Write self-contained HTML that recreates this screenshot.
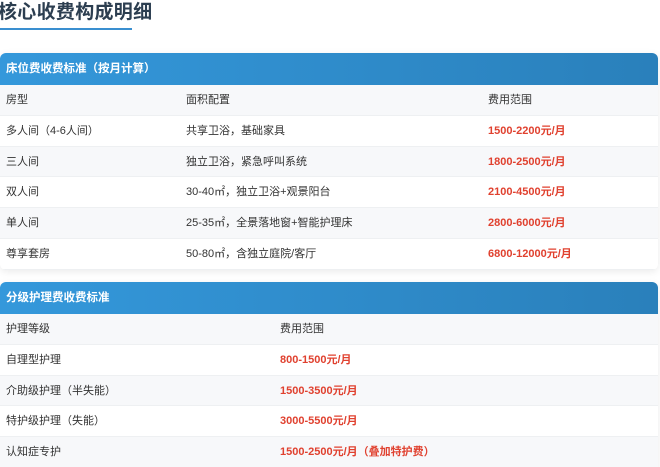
<!DOCTYPE html>
<html><head><meta charset="utf-8"><style>
*{margin:0;padding:0;box-sizing:border-box}
html,body{width:660px;height:467px;overflow:hidden}
body{background:#fff;font-family:"Liberation Sans","Noto Sans CJK SC",sans-serif;color:#333;position:relative}
h2{position:absolute;left:-2px;top:0;font-size:19px;font-weight:bold;color:#2c3e50;line-height:26px;letter-spacing:0.3px}
.ul{position:absolute;left:0;top:28px;width:132px;height:2px;background:#3a8fd0}
.card{position:absolute;left:0;width:658px;background:#fff;border-radius:6px;box-shadow:0 2px 8px rgba(0,0,0,0.08);overflow:hidden}
.hd{height:32px;background:linear-gradient(90deg,#3498db,#2a80bb);color:#fff;font-weight:bold;font-size:11.5px;line-height:32px;padding-left:6px}
.row{height:30.8px;font-size:11px;line-height:30.8px;position:relative;border-bottom:1px solid #eef0f2}
.row span{position:absolute;top:0}
.g{background:#f7f8fa}
.p{color:#e0412f;font-weight:bold}
</style></head><body>
<h2>核心收费构成明细</h2><div class="ul"></div>
<div class="card" style="top:53px;height:217px">
<div class="hd">床位费收费标准（按月计算）</div>
<div class="row g"><span style="left:6px">房型</span><span style="left:186px">面积配置</span><span style="left:488px">费用范围</span></div>
<div class="row"><span style="left:6px">多人间（4-6人间）</span><span style="left:186px">共享卫浴，基础家具</span><span style="left:488px" class="p">1500-2200元/月</span></div>
<div class="row g"><span style="left:6px">三人间</span><span style="left:186px">独立卫浴，紧急呼叫系统</span><span style="left:488px" class="p">1800-2500元/月</span></div>
<div class="row"><span style="left:6px">双人间</span><span style="left:186px">30-40㎡，独立卫浴+观景阳台</span><span style="left:488px" class="p">2100-4500元/月</span></div>
<div class="row g"><span style="left:6px">单人间</span><span style="left:186px">25-35㎡，全景落地窗+智能护理床</span><span style="left:488px" class="p">2800-6000元/月</span></div>
<div class="row"><span style="left:6px">尊享套房</span><span style="left:186px">50-80㎡，含独立庭院/客厅</span><span style="left:488px" class="p">6800-12000元/月</span></div>
</div>
<div class="card" style="top:282px;height:200px">
<div class="hd">分级护理费收费标准</div>
<div class="row g"><span style="left:6px">护理等级</span><span style="left:280px">费用范围</span></div>
<div class="row"><span style="left:6px">自理型护理</span><span style="left:280px" class="p">800-1500元/月</span></div>
<div class="row g"><span style="left:6px">介助级护理（半失能）</span><span style="left:280px" class="p">1500-3500元/月</span></div>
<div class="row"><span style="left:6px">特护级护理（失能）</span><span style="left:280px" class="p">3000-5500元/月</span></div>
<div class="row g"><span style="left:6px">认知症专护</span><span style="left:280px" class="p">1500-2500元/月（叠加特护费）</span></div>
</div>
</body></html>
